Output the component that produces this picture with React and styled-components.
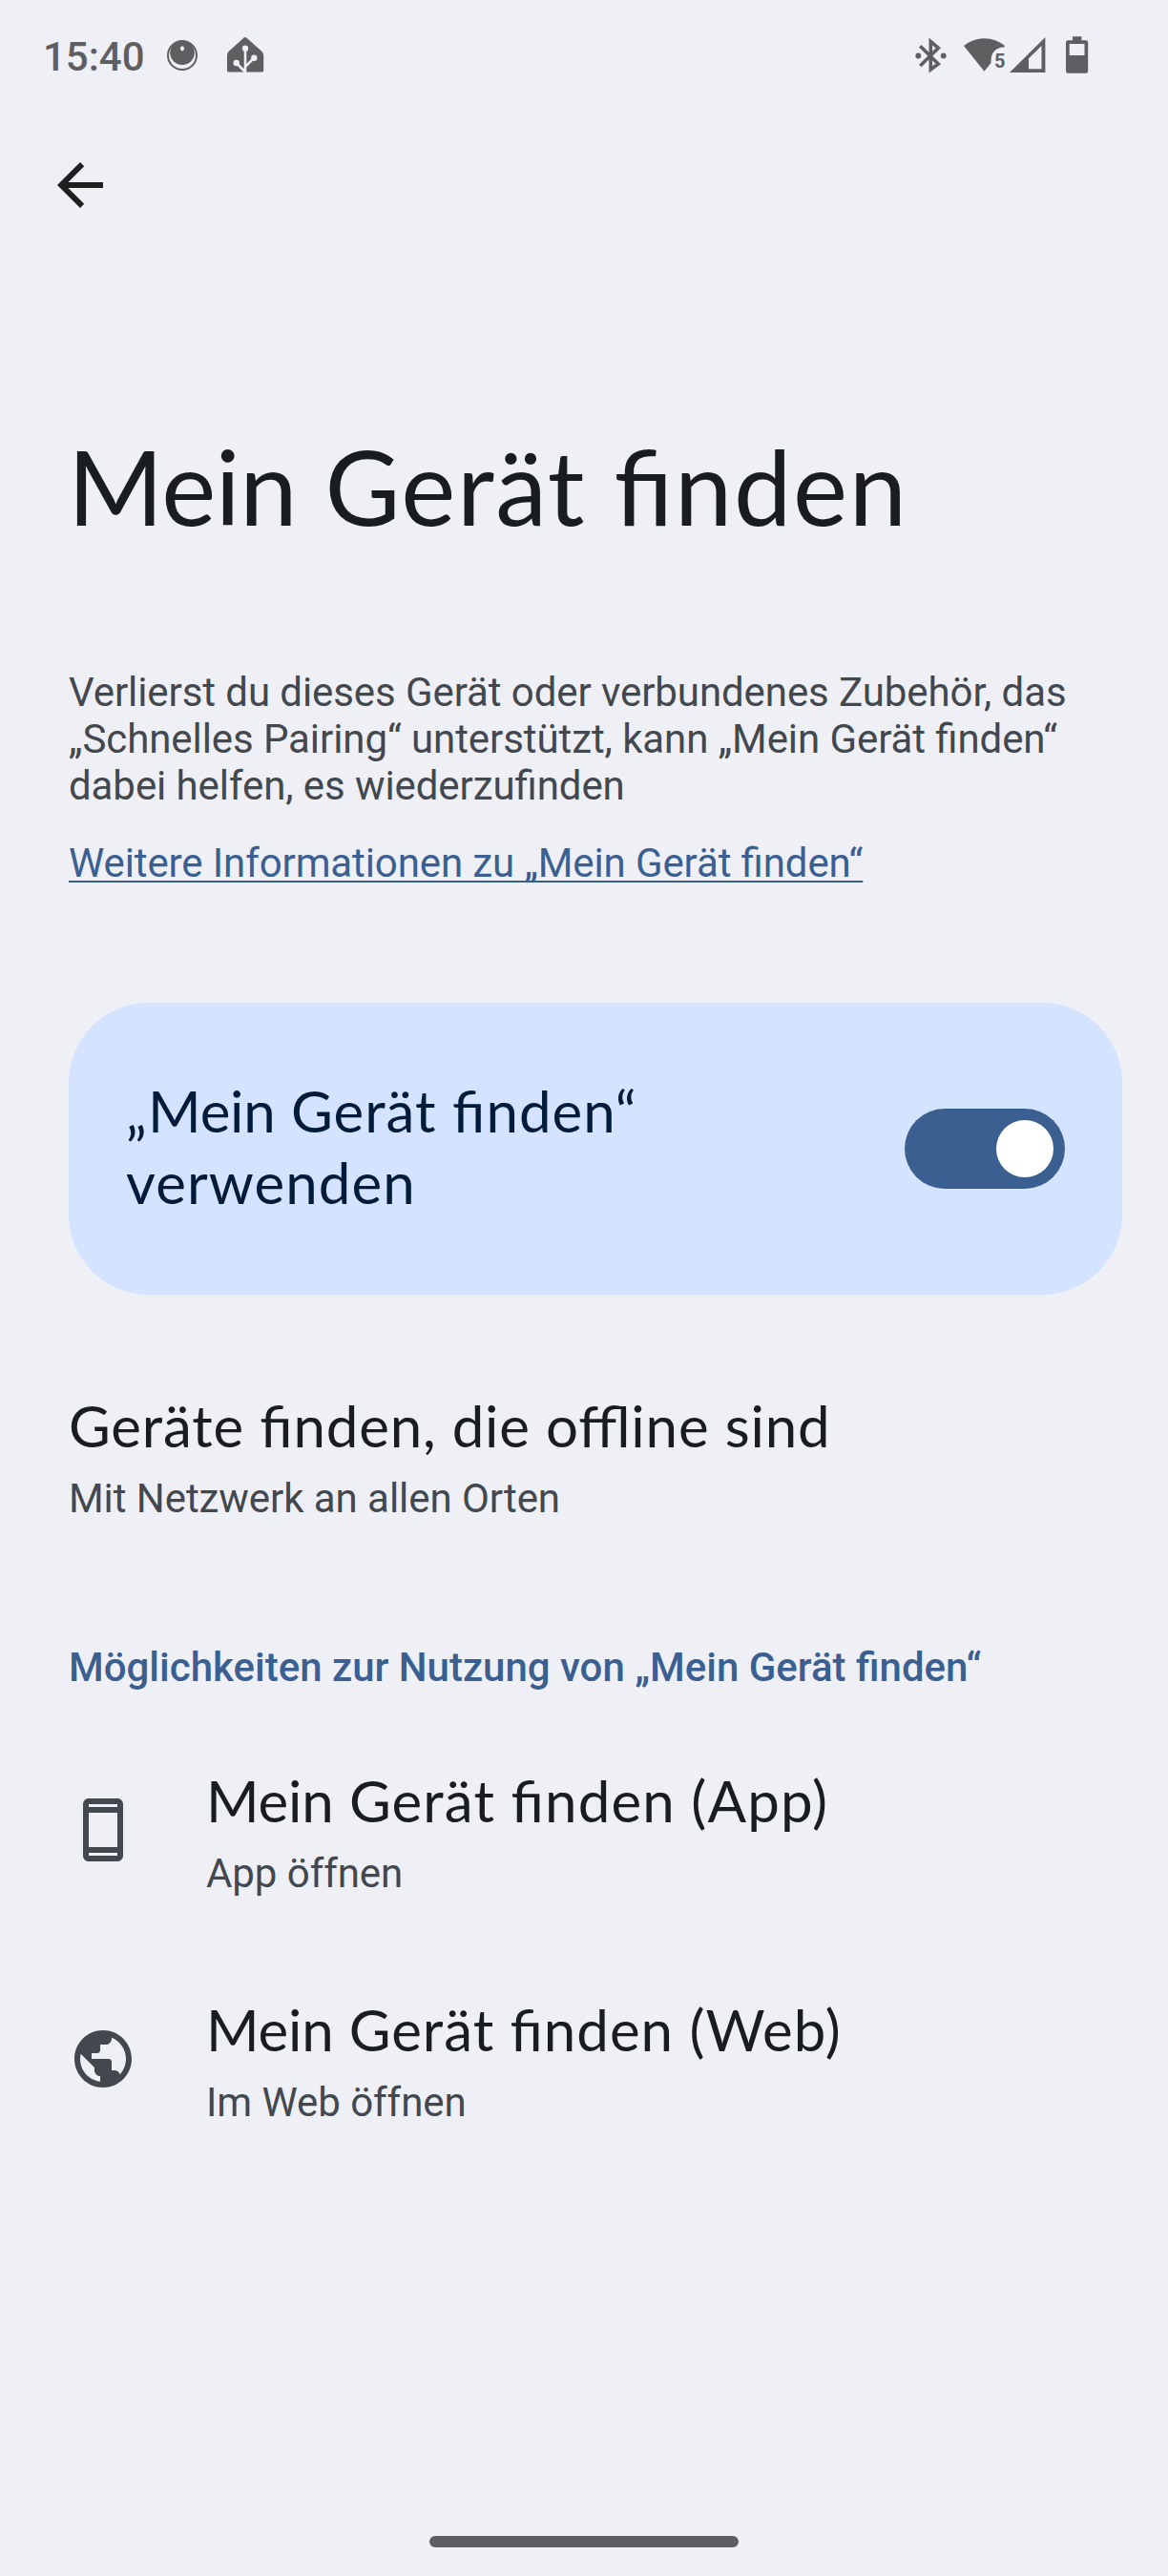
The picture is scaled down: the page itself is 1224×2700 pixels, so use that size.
import { useState } from 'react';
import styled, { createGlobalStyle } from 'styled-components';

const colors = {
  background: '#eff0f6',
  text: '#191c20',
  textSecondary: '#43474e',
  primary: '#3b5f90',
  card: '#d4e3ff',
  cardText: '#001c3a',
  status: '#5f5f61',
};

const GlobalStyle = createGlobalStyle`
  * {
    box-sizing: border-box;
  }
  body {
    margin: 0;
    background: ${colors.background};
    font-family: Roboto, sans-serif;
    font-feature-settings: 'liga' 1;
  }
`;
const Screen = styled.div`
  display: flex;
  flex-direction: column;
  width: 1224px;
  height: 2700px;
  background: ${colors.background};
  color: ${colors.text};
`;
const StatusBar = styled.div`
  display: flex;
  align-items: center;
  justify-content: space-between;
  height: 116px;
  padding: 0 83px 0 45px;
  color: ${colors.status};
`;
const StatusGroup = styled.div`
  display: flex;
  align-items: center;
`;
const Time = styled.span`
  width: 107px;
  padding-top: 3px;
  font-size: 42px;
  font-weight: 500;
  line-height: 49px;
`;
const StatusIcon = styled.svg`
  display: block;
  flex: none;
  margin-left: ${(props) => props.$gap || 0}px;
  fill: currentColor;
`;
const AppBar = styled.header`
  padding: 42px 48px 0;
`;
const BackButton = styled.button`
  display: block;
  width: 72px;
  height: 72px;
  padding: 0;
  border: 0;
  background: transparent;
  color: #1f1f1f;
  cursor: pointer;
`;
const Icon = styled.svg`
  display: block;
  flex: none;
  width: 72px;
  height: 72px;
  fill: currentColor;
`;
const Title = styled.h1`
  margin: 214px 72px 0 71px;
  font-family: Lato, sans-serif;
  font-size: 108px;
  font-weight: 400;
  line-height: 130px;
  letter-spacing: 0.0155em;
`;
// the first word sits a little tighter than the rest of the name
const Tight = styled.span`
  letter-spacing: -0.004em;
`;
const Content = styled.main`
  flex: 1;
  display: flex;
  flex-direction: column;
  padding: 127px 48px 0 72px;
`;
const Intro = styled.p`
  margin: 0;
  color: ${colors.textSecondary};
  font-size: 42px;
  line-height: 49px;
  letter-spacing: -0.08px;
`;
const MoreLink = styled.a`
  align-self: flex-start;
  margin-top: 32px;
  color: ${colors.primary};
  font-size: 42px;
  line-height: 49px;
  letter-spacing: -0.11px;
  text-decoration: underline;
  text-decoration-thickness: 2px;
  text-decoration-skip-ink: none;
  text-underline-offset: 4px;
`;
const MainSwitch = styled.div`
  display: flex;
  align-items: center;
  justify-content: space-between;
  height: 306px;
  margin-top: 122px;
  padding: 0 60px;
  border-radius: 84px;
  background: ${colors.card};
  color: ${colors.cardText};
`;
const SwitchLabel = styled.div`
  padding-bottom: 5px;
  font-family: Lato, sans-serif;
  font-size: 60px;
  line-height: 75px;
  letter-spacing: 0.0175em;
`;
const Track = styled.button`
  display: flex;
  align-items: center;
  justify-content: ${(props) => (props.$on ? 'flex-end' : 'flex-start')};
  flex: none;
  width: 168px;
  height: 84px;
  padding: 0 12px;
  border: 0;
  border-radius: 42px;
  background: ${(props) => (props.$on ? colors.primary : '#74777f')};
  cursor: pointer;
`;
const Thumb = styled.span`
  width: 60px;
  height: 60px;
  border-radius: 50%;
  background: #fff;
`;
const Preference = styled.div`
  display: flex;
  align-items: flex-start;
  gap: 72px;
  margin-top: ${(props) => props.$top}px;
`;
const PreferenceIcon = styled.div`
  margin-top: 31px;
  color: ${colors.textSecondary};
`;
const PreferenceTitle = styled.div`
  font-family: Lato, sans-serif;
  font-size: 60px;
  line-height: 72px;
  letter-spacing: ${(props) => props.$tracking || 0.014}em;
`;
const Summary = styled.div`
  margin-top: 16px;
  color: ${colors.textSecondary};
  font-size: 42px;
  line-height: 49px;
  letter-spacing: -0.06px;
`;
const Category = styled.h2`
  margin: 128px 0 0;
  color: ${colors.primary};
  font-size: 42px;
  font-weight: 500;
  line-height: 49px;
`;
const GestureBar = styled.div`
  align-self: center;
  width: 324px;
  height: 12px;
  margin-bottom: 30px;
  border-radius: 6px;
  background: ${colors.status};
`;

function RecorderIcon() {
  return (
    <StatusIcon $gap={23} width="32" height="32" viewBox="0 0 32 32">
      <circle cx="16" cy="16" r="15" fill="none" stroke="currentColor" strokeWidth="2" />
      <circle cx="16" cy="13.2" r="12.8" />
      <ellipse cx="16" cy="8.8" rx="2" ry="2.6" fill={colors.background} />
    </StatusIcon>
  );
}

function HomeAssistantIcon() {
  return (
    <StatusIcon $gap={30} width="40" height="40" viewBox="0 0 40 40">
      <path d="M18.6 1.5 Q19.9 .4 21.2 1.5 L37.5 16 Q39.2 18 39.2 20 V36 Q39.2 37.6 37.6 37.6 H2.6 Q1 37.6 1 36 V20 Q1 18 2.6 16 Z" />
      <g stroke={colors.background} strokeWidth="2.6" fill="none">
        <path d="M20 13 V38 M10.7 28 L20 37.3 M29.3 22.7 L20 32" />
      </g>
      <g fill={colors.background}>
        <circle cx="20" cy="12.7" r="3.2" />
        <circle cx="10.7" cy="28" r="3.2" />
        <circle cx="29.3" cy="22.7" r="3.2" />
      </g>
    </StatusIcon>
  );
}

function BluetoothIcon() {
  return (
    <StatusIcon width="33" height="40" viewBox="0 0 33 40">
      <path
        d="M5.3 10.3 L24.3 29 L16.3 35 V5.5 L24.3 12.3 L5.3 31"
        fill="none"
        stroke="currentColor"
        strokeWidth="3.6"
      />
      <circle cx="3.3" cy="20.5" r="2.9" />
      <circle cx="29.7" cy="20.5" r="2.9" />
    </StatusIcon>
  );
}

const WifiLabel = styled.text`
  font-family: Roboto, sans-serif;
  font-size: 20px;
  font-weight: 700;
`;

function WifiIcon() {
  return (
    <StatusIcon $gap={18} width="44" height="40" viewBox="0 0 44 40">
      <path d="M0 10 C6 5 13.5 2.2 21.5 2.2 S37 5 43 10 L42 11.6 C33 11.6 28.5 18 28.5 26 V28 L21.5 36.7 Z" />
      <WifiLabel x="32" y="32.7">5</WifiLabel>
    </StatusIcon>
  );
}

function SignalIcon() {
  return (
    <StatusIcon $gap={4} width="38" height="40" viewBox="0 0 38 40">
      <path fillRule="evenodd" d="M0 38 H37.4 V1 Z M20 34.3 V23.3 L33.5 10 V34.3 Z" />
    </StatusIcon>
  );
}

function BatteryIcon() {
  return (
    <StatusIcon $gap={21} width="24" height="40" viewBox="0 0 24 40">
      <path
        fillRule="evenodd"
        d="M7 .3 H16.4 V4.3 H21 Q23.2 4.3 23.2 6.5 V36.6 Q23.2 38.8 21 38.8 H2.2 Q0 38.8 0 36.6 V6.5 Q0 4.3 2.2 4.3 H7 Z M3.7 8 V20 H19.5 V8 Z"
      />
    </StatusIcon>
  );
}

function ArrowBackIcon() {
  return (
    <Icon viewBox="0 0 24 24">
      <path d="M20 11H7.83l5.59-5.59L12 4l-8 8 8 8 1.41-1.41L7.83 13H20v-2z" />
    </Icon>
  );
}

function PhoneIcon() {
  return (
    <Icon viewBox="0 0 24 24">
      <path
        fillRule="evenodd"
        d="M7 1h10c1.1 0 2 .9 2 2v18c0 1.1-.9 2-2 2H7c-1.1 0-2-.9-2-2V3c0-1.1.9-2 2-2z M7 3v1h10V3z M7 6v12h10V6z M7 20v1h10v-1z"
      />
    </Icon>
  );
}

function GlobeIcon() {
  return (
    <Icon viewBox="0 0 24 24">
      <path d="M12 2C6.48 2 2 6.48 2 12s4.48 10 10 10 10-4.48 10-10S17.52 2 12 2zm-1 17.93c-3.95-.49-7-3.85-7-7.93 0-.62.08-1.21.21-1.79L9 15v1c0 1.1.9 2 2 2v1.93zm6.9-2.54c-.26-.81-1-1.39-1.9-1.39h-1v-3c0-.55-.45-1-1-1H8v-2h2c.55 0 1-.45 1-1V7h2c1.1 0 2-.9 2-2v-.41c2.93 1.19 5 4.06 5 7.41 0 2.08-.8 3.97-2.1 5.39z" />
    </Icon>
  );
}

function ProductName() {
  return (
    <>
      <Tight>Mein</Tight> Gerät finden
    </>
  );
}

export default function App() {
  const [enabled, setEnabled] = useState(true);
  return (
    <Screen>
      <GlobalStyle />
      <StatusBar>
        <StatusGroup>
          <Time>15:40</Time>
          <RecorderIcon />
          <HomeAssistantIcon />
        </StatusGroup>
        <StatusGroup>
          <BluetoothIcon />
          <WifiIcon />
          <SignalIcon />
          <BatteryIcon />
        </StatusGroup>
      </StatusBar>
      <AppBar>
        <BackButton aria-label="Zurück">
          <ArrowBackIcon />
        </BackButton>
      </AppBar>
      <Title>
        <ProductName />
      </Title>
      <Content>
        <Intro>
          Verlierst du dieses Gerät oder verbundenes Zubehör, das
          <br />
          „Schnelles Pairing“ unterstützt, kann „Mein Gerät finden“
          <br />
          dabei helfen, es wiederzufinden
        </Intro>
        <MoreLink href="#">Weitere Informationen zu „Mein Gerät finden“</MoreLink>
        <MainSwitch>
          <SwitchLabel>
            „<ProductName />“
            <br />
            verwenden
          </SwitchLabel>
          <Track
            $on={enabled}
            role="switch"
            aria-checked={enabled}
            onClick={() => setEnabled((prev) => !prev)}
          >
            <Thumb />
          </Track>
        </MainSwitch>
        <Preference $top={101}>
          <div>
            <PreferenceTitle>Geräte finden, die offline sind</PreferenceTitle>
            <Summary>Mit Netzwerk an allen Orten</Summary>
          </div>
        </Preference>
        <Category>Möglichkeiten zur Nutzung von „Mein Gerät finden“</Category>
        <Preference $top={79}>
          <PreferenceIcon>
            <PhoneIcon />
          </PreferenceIcon>
          <div>
            <PreferenceTitle $tracking={0.019}>
              <ProductName /> (App)
            </PreferenceTitle>
            <Summary>App öffnen</Summary>
          </div>
        </Preference>
        <Preference $top={103}>
          <PreferenceIcon>
            <GlobeIcon />
          </PreferenceIcon>
          <div>
            <PreferenceTitle $tracking={0.0165}>
              <ProductName /> (Web)
            </PreferenceTitle>
            <Summary>Im Web öffnen</Summary>
          </div>
        </Preference>
      </Content>
      <GestureBar />
    </Screen>
  );
}
